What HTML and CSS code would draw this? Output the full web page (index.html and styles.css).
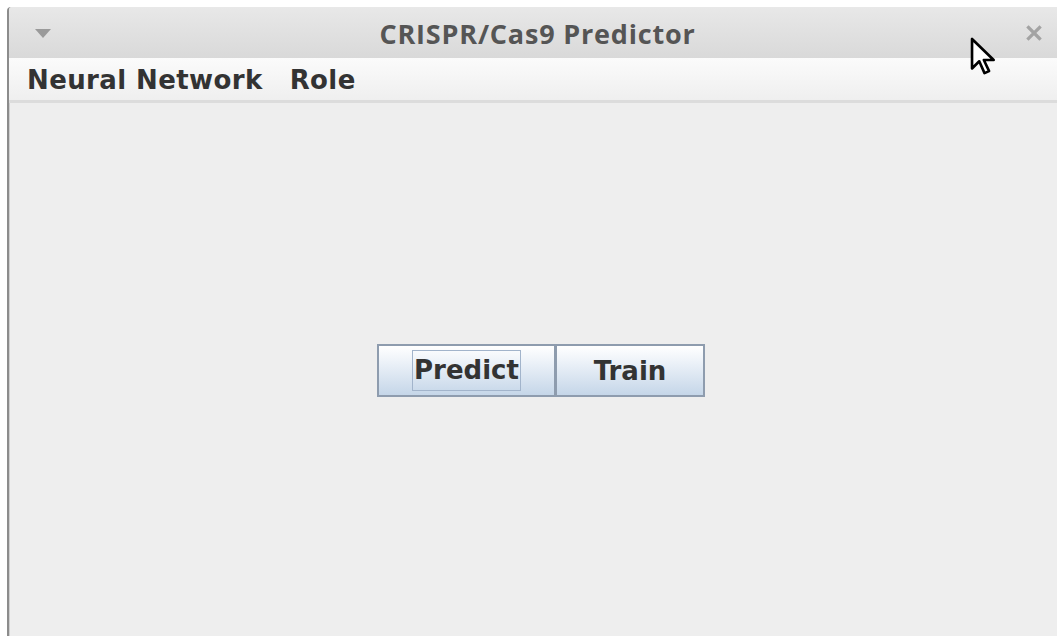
FILE: index.html
```html
<!DOCTYPE html>
<html>
<head>
<meta charset="utf-8">
<title>CRISPR/Cas9 Predictor</title>
<link rel="stylesheet" href="styles.css">
</head>
<body>
<div class="desk">
  <div class="window">
    <div class="titlebar">
      <span class="menu-arrow"></span>
      <span class="title">CRISPR/Cas9 Predictor</span>
      <svg class="close" width="16" height="16" viewBox="0 0 16 16">
        <path d="M2.5 2.5 L13.5 13.5 M13.5 2.5 L2.5 13.5" stroke="#a3a3a3" stroke-width="3.2" stroke-linecap="square"/>
      </svg>
    </div>
    <div class="menubar">
      <span class="menu-item">Neural Network</span>
      <span class="menu-item">Role</span>
    </div>
    <div class="content">
      <div class="btn-group">
        <button class="btn btn-predict"><span class="focus">Predict</span></button>
        <button class="btn btn-train">Train</button>
      </div>
    </div>
  </div>
  <svg class="cursor" width="29" height="42" viewBox="0 0 22 32">
    <path d="M1.5 1.5 L1.5 24 L7 18.5 L11 27.5 L14.5 26 L10.5 17.5 L18 17.5 Z" fill="#fff" stroke="#000" stroke-width="2" stroke-linejoin="round"/>
  </svg>
</div>
</body>
</html>
```
FILE: styles.css
```css
html, body {
  margin: 0;
  padding: 0;
  width: 1057px;
  height: 636px;
  overflow: hidden;
  background: #ffffff;
}
.desk {
  position: relative;
  width: 1057px;
  height: 636px;
  padding: 7px 0 0 7px;
  box-sizing: border-box;
}
.window {
  height: 100%;
  display: flex;
  flex-direction: column;
  border-left: 2px solid #8c8c8c;
  border-top-left-radius: 4px;
  box-shadow: inset 1px 0 0 #cfcfcf;
  background: #eeeeee;
}
.titlebar {
  height: 51px;
  flex: none;
  display: flex;
  align-items: center;
  background: linear-gradient(#e8e8e8, #d9d9d9);
  border-top-left-radius: 3px;
  position: relative;
}
.menu-arrow {
  width: 0;
  height: 0;
  border-left: 8px solid transparent;
  border-right: 8px solid transparent;
  border-top: 9px solid #9a9a9a;
  margin-left: 26px;
  margin-top: 2px;
}
.title {
  flex: 1;
  text-align: center;
  font-family: "Open Sans", "DejaVu Sans", sans-serif;
  font-weight: 700;
  font-size: 27px;
  letter-spacing: 0.8px;
  color: #555555;
  margin-left: -2px;
  margin-top: 2px;
}
.close {
  margin-right: 15px;
  margin-top: 1px;
}
.menubar {
  flex: none;
  display: flex;
  align-items: center;
  gap: 27px;
  padding-left: 18px;
  padding-top: 2px;
  background: linear-gradient(#fbfbfb, #efefef);
  border-bottom: 3px solid #dcdcdc;
  box-sizing: border-box;
  height: 45px;
}
.menu-item {
  font-family: "DejaVu Sans", sans-serif;
  font-weight: 700;
  font-size: 26px;
  letter-spacing: 0.4px;
  color: #333333;
}
.content {
  flex: 1;
  display: flex;
  justify-content: center;
  align-items: flex-start;
  padding-top: 241px;
  padding-left: 16px;
}
.btn-group {
  display: flex;
}
.btn {
  height: 53px;
  border: 2px solid #8e9cae;
  background: linear-gradient(#ffffff 0%, #eef3f9 30%, #c5d6e8 100%);
  font-family: "DejaVu Sans", sans-serif;
  font-weight: 700;
  font-size: 26px;
  color: #333333;
  padding: 0;
  margin: 0;
  display: flex;
  align-items: center;
  justify-content: center;
}
.btn-predict {
  width: 179px;
}
.btn-train {
  width: 150px;
  margin-left: -1px;
}
.focus {
  border: 1px solid #a2b4cb;
  padding: 5px 1px 6px 1px;
  line-height: 28px;
}
.cursor {
  position: absolute;
  left: 970px;
  top: 37px;
}
```
